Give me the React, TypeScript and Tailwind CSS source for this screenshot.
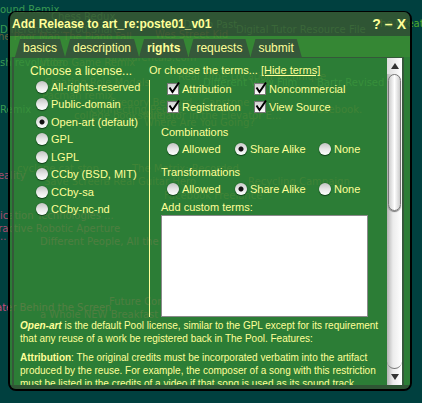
import { useState } from 'react';
import { clsx } from 'clsx';

const PINK = 'text-[#a84b6e]';
const GREEN = 'text-[#3a9a52]';
const DIM = 'text-[#64603c]';

// Project titles scattered over the map behind the dialog
const titles = [
  { text: 'ound Remix', x: 0, y: 4, color: GREEN },
  { text: 'Chess Redux', x: 51, y: 11, color: GREEN },
  { text: 'Differences... Pod Share', x: 0, y: 24, color: GREEN },
  { text: 'the Poor Man The Piano Fall', x: -6, y: 31, color: DIM },
  { text: 'Project Demo Past', x: 146, y: 19, color: GREEN },
  { text: 'Wes Street Kid', x: 155, y: 29, color: DIM },
  { text: 'Digital Tutor Resource File', x: 236, y: 24, color: GREEN },
  { text: 'The Great', x: 374, y: 18, color: 'text-[#4fa82c]' },
  { text: 'orbitarentals.com', x: 108, y: 52, color: DIM },
  { text: 'sh revolution', x: 0, y: 57, color: GREEN },
  { text: 'Video Game Remix', x: 40, y: 57, color: DIM },
  { text: 'Creating Role Models', x: 44, y: 77, color: DIM },
  { text: 'Real Time Location Technique', x: 178, y: 71, color: DIM },
  { text: 'Different View Film', x: 203, y: 77, color: GREEN },
  { text: 'Bartr Revised', x: 317, y: 77, color: GREEN },
  { text: 'Pacman remix', x: 42, y: 90, color: DIM },
  { text: 'Gregory Bernard - Capstone', x: 109, y: 97, color: DIM },
  { text: 'Remix', x: 0, y: 104, color: GREEN },
  { text: 'Connecting People', x: 90, y: 104, color: DIM },
  { text: 'Facebook.', x: 312, y: 104, color: DIM },
  { text: 'college bookstore', x: 74, y: 110, color: DIM },
  { text: 'Alligator in the Elevator E...', x: 144, y: 110, color: DIM },
  { text: 'Where Are You Going?', x: 144, y: 117, color: DIM },
  { text: 'cyclone cat stop', x: 17, y: 163, color: DIM },
  { text: 'The Matrix: Recorded', x: 132, y: 163, color: DIM },
  { text: 'reality', x: -6, y: 170, color: PINK },
  { text: 'Save Screen', x: 44, y: 176, color: DIM },
  { text: 'a Real Guitar Hero', x: 104, y: 176, color: DIM },
  { text: 'Recycling Campaign', x: 248, y: 176, color: DIM },
  { text: 'Facebook Freelance', x: 164, y: 190, color: DIM },
  { text: 'ication Technologies ...', x: 0, y: 210, color: PINK },
  { text: 'eractive Robotic Aperture', x: -8, y: 223, color: PINK },
  { text: '..', x: 0, y: 231, color: PINK },
  { text: 'Different People, All the Tea', x: 40, y: 236, color: PINK },
  { text: 'Future Com', x: 109, y: 296, color: PINK },
  { text: 'ater Behind the Screen', x: -4, y: 302, color: 'text-[#c8487c]' },
  { text: 'a Whole NEW Breakfast', x: 40, y: 309, color: PINK },
];

const tabs = ['basics', 'description', 'rights', 'requests', 'submit'];

const licenses = [
  'All-rights-reserved',
  'Public-domain',
  'Open-art (default)',
  'GPL',
  'LGPL',
  'CCby (BSD, MIT)',
  'CCby-sa',
  'CCby-nc-nd',
];

const terms = ['Attribution', 'Noncommercial', 'Registration', 'View Source'];
const sharing = ['Allowed', 'Share Alike', 'None'];

interface RadioProps {
  name: string;
  label: string;
  checked?: boolean;
}

function Radio({ name, label, checked }: RadioProps) {
  return (
    <label className="flex items-center gap-[3px] leading-4 whitespace-nowrap">
      <input
        type="radio"
        name={name}
        defaultChecked={checked}
        className="size-3 shrink-0 appearance-none rounded-full bg-linear-to-b from-[#c4c4c4] via-[#e6e6e6] to-white shadow-[0_1px_1px_#12401b,0_0_1px_#12401b] checked:bg-[radial-gradient(circle,#111_0_2px,transparent_3px),linear-gradient(#ccc,#fff)]"
      />
      {label}
    </label>
  );
}

function Checkbox({ label }: { label: string }) {
  return (
    <label className="flex items-center gap-[3px] leading-4 whitespace-nowrap">
      <span className="relative size-3 shrink-0">
        <input
          type="checkbox"
          defaultChecked
          className="peer block size-3 appearance-none border border-[#777] bg-linear-to-b from-[#d0d0d0] to-white"
        />
        <svg
          viewBox="0 0 14 14"
          className="pointer-events-none absolute -top-0.5 left-0 hidden size-3.5 peer-checked:block"
          fill="none"
          stroke="#000"
          strokeWidth="2"
        >
          <path d="M2.5 6.5 5.5 11 12 1.5" />
        </svg>
      </span>
      {label}
    </label>
  );
}

function SharingGroup({ title }: { title: string }) {
  return (
    <fieldset>
      <legend className="leading-4">{title}</legend>
      <div className="mt-px grid grid-cols-[68px_84px_auto] pl-1.5">
        {sharing.map((option) => (
          <Radio key={option} name={title} label={option} checked={option === 'Share Alike'} />
        ))}
      </div>
    </fieldset>
  );
}

function Scrollbar() {
  return (
    <div className="flex w-[15px] shrink-0 flex-col bg-linear-to-r from-[#b4b4b4] via-[#ececec] via-40% to-white">
      <button aria-label="Scroll up" className="flex h-4 items-center justify-center bg-linear-to-r from-[#ddd] to-white">
        <svg viewBox="0 0 8 6" className="h-1.5 w-2" fill="#333">
          <path d="M4 0 8 6H0z" />
        </svg>
      </button>
      <div className="mx-px h-[42%] rounded-full border border-[#777] bg-linear-to-r from-[#ccc] via-white via-50% to-[#ccc] shadow-[0_1px_1px_#777]" />
      <div className="flex-1 rounded-b-full border-b border-[#777]" />
      <button aria-label="Scroll down" className="flex h-4 items-center justify-center">
        <svg viewBox="0 0 8 6" className="h-1.5 w-2" fill="#333">
          <path d="M0 0h8L4 6z" />
        </svg>
      </button>
    </div>
  );
}

export default function App() {
  const [active, setActive] = useState('rights');

  return (
    <div className="relative flex h-screen overflow-hidden bg-[#00403f] px-2 pt-[11px] pb-3 font-['Liberation_Sans',Arial,sans-serif] text-[11px] text-[#ffff99]">
      {titles.map((t) => (
        <span
          key={t.text}
          className={clsx("absolute font-['DejaVu_Sans',sans-serif] text-[10px] leading-3 whitespace-nowrap", t.color)}
          style={{ left: t.x, top: t.y }}
        >
          {t.text}
        </span>
      ))}

      <section className="relative mr-0.5 flex min-w-0 flex-1 flex-col overflow-hidden rounded-lg border-2 border-t border-black">
        <header className="flex h-6 shrink-0 items-center justify-between bg-[#3b5a32]/80 pr-1 pl-0.5 font-bold">
          <h1 className="text-[12px] whitespace-nowrap">Add Release to art_re:poste01_v01</h1>
          <div className="flex gap-1 text-[14px] leading-4">
            <button aria-label="Help">?</button>
            <button aria-label="Minimize">–</button>
            <button aria-label="Close">X</button>
          </div>
        </header>

        <nav className="flex h-[21px] shrink-0 items-end bg-[#429932]/80 pl-[5px]">
          {tabs.map((tab) => (
            <button
              key={tab}
              onClick={() => setActive(tab)}
              className={clsx(
                'h-[18px] bg-[#35583a] px-2 text-[12px] leading-4 [clip-path:polygon(5px_0,calc(100%-5px)_0,100%_100%,0_100%)]',
                active === tab && 'font-bold'
              )}
            >
              {tab}
            </button>
          ))}
        </nav>

        <div className="flex min-h-0 flex-1 bg-[#378c34]/80 pr-1.5 pl-0.5">
          <div className="flex min-w-0 flex-1 border-x-2 border-t border-[#35583a]">
            <div className="min-w-0 flex-1 overflow-hidden">
              <div className="flex">
                <fieldset className="w-[135px] shrink-0 pt-[5px] pl-4">
                  <legend className="float-left text-[12px] leading-4 whitespace-nowrap">Choose a license...</legend>
                  <div className="clear-both flex h-[138px] flex-col justify-between pl-1.5">
                    {licenses.map((license) => (
                      <Radio
                        key={license}
                        name="license"
                        label={license}
                        checked={license === 'Open-art (default)'}
                      />
                    ))}
                  </div>
                </fieldset>

                <div className="flex min-w-0 flex-1 flex-col pt-1">
                  <p className="leading-4 whitespace-nowrap">
                    Or choose the terms...{' '}
                    <a href="#terms" className="underline">
                      [Hide terms]
                    </a>
                  </p>

                  <div id="terms" className="mt-0.5 border-l border-[#ffff99] pl-[11px]">
                    <div className="grid grid-cols-[87px_auto] gap-y-0.5 pt-px pl-1.5">
                      {terms.map((term) => (
                        <Checkbox key={term} label={term} />
                      ))}
                    </div>
                    <div className="mt-[9px] flex flex-col gap-[7px]">
                      <SharingGroup title="Combinations" />
                      <SharingGroup title="Transformations" />
                    </div>
                    <label htmlFor="custom-terms" className="mt-0.5 block leading-4">
                      Add custom terms:
                    </label>
                    <textarea
                      id="custom-terms"
                      className="block h-[102px] w-[calc(100%-19px)] resize-none border border-[#8a8a8a] bg-white p-1 text-black"
                    />
                  </div>
                </div>
              </div>

              <div className="px-1.5 pt-0.5 text-[10px] leading-[13px] whitespace-nowrap">
                <p>
                  <b>
                    <i>Open-art</i>
                  </b>{' '}
                  is the default Pool license, similar to the GPL except for its requirement
                  <br />
                  that any reuse of a work be registered back in The Pool. Features:
                </p>
                <p className="mt-1.5">
                  <b>Attribution</b>: The original credits must be incorporated verbatim into the artifact
                  <br />
                  produced by the reuse. For example, the composer of a song with this restriction
                  <br />
                  must be listed in the credits of a video if that song is used as its sound track.
                </p>
              </div>
            </div>

            <Scrollbar />
          </div>
        </div>
        <div className="h-1 shrink-0 bg-[#3b5a32]/80" />
      </section>
    </div>
  );
}
